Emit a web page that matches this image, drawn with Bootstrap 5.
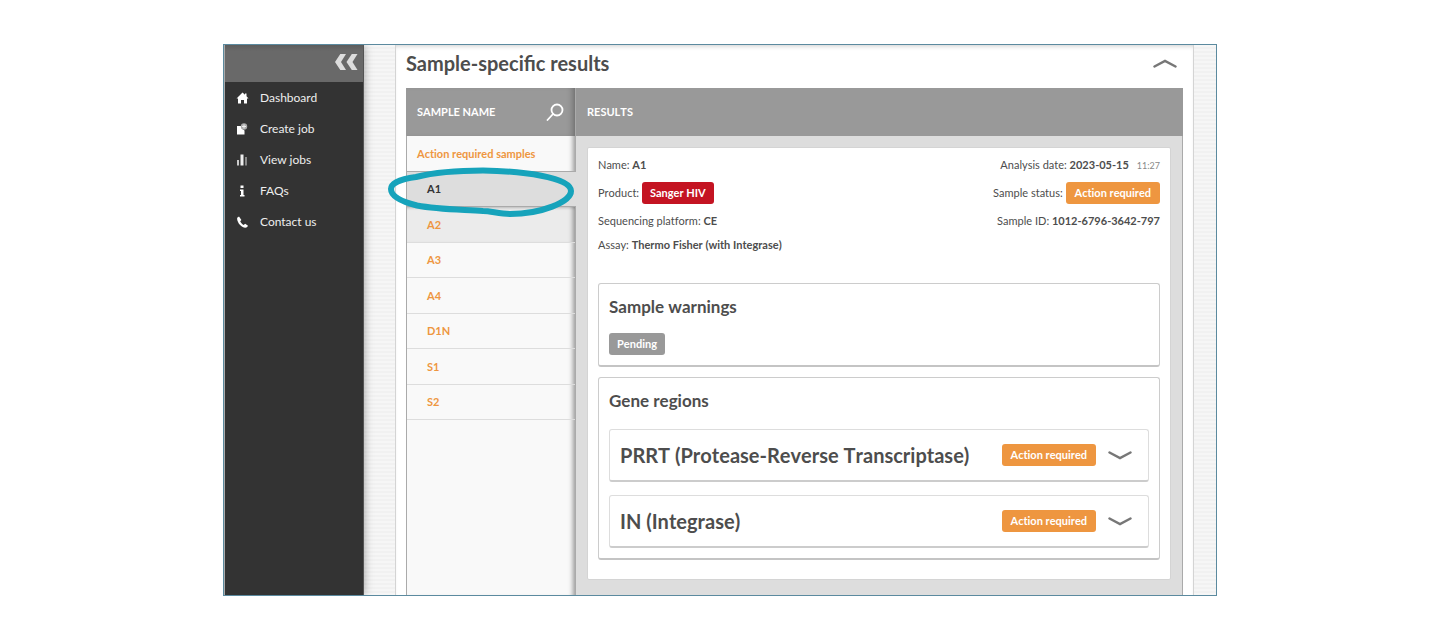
<!DOCTYPE html>
<html lang="en">
<head>
<meta charset="utf-8">
<meta name="viewport" content="width=device-width, initial-scale=1">
<title>Sample-specific results</title>
<link href="https://cdn.jsdelivr.net/npm/bootstrap@5.3.0/dist/css/bootstrap.min.css" rel="stylesheet">
<style>
body{font-family:Lato,"Liberation Sans",sans-serif;font-size:12px;line-height:16px;color:#4d4d4d;background:#fff}
.page{padding:44px 223px}
.shell{border:1px solid #5b8a9f;min-height:552px;background:#f4f4f4 repeating-linear-gradient(#f6f6f6 0 2px,#f1f1f1 2px 4px);overflow:hidden}
.side{width:140px;background:#333;border-left:1px solid #aaa;border-right:1px solid #555;box-shadow:0 0 9px rgba(0,0,0,.35);z-index:1}
.side-top{height:37px;background:linear-gradient(#5c5c5c,#696969 6px);padding:0 5px 3px}
.side-link{height:31px;gap:11px;padding-left:11px;color:#eee;text-decoration:none}
.side-link:hover{color:#fff}
.panel{margin:0 22px 0 31px;padding:0 10px;background:#fff;border:solid #d4d4d4;border-width:0 1px;box-shadow:inset 0 4px 5px -3px rgba(0,0,0,.2)}
.panel-head{height:43px;padding-right:6px;padding-bottom:8px}
.panel-title{font-size:20px;line-height:24px;font-weight:700;margin:0}
.icon-btn{border:0;background:none;padding:0;line-height:0;color:#777}
.names{width:170px;background:#f9f9f9;border-left:1px solid #aaa;box-shadow:inset -6px 0 5px -4px rgba(0,0,0,.4);border-right:1px solid #aaa}
.bar{height:48px;background:#999;color:#fff;font-size:11px;font-weight:700;font-kerning:none}
.names .bar{padding:0 11px 0 10px;margin-left:-1px;border-left:1px solid #999;box-shadow:inset -6px 0 6px -4px rgba(0,0,0,.3)}
.results{background:#ddd;border-right:1px solid #aaa}
.results .bar{padding:0 11px;margin-right:-1px}
.rows{height:284px}
.row-item{padding:1px 0 0 20px;border-bottom:1px solid #ddd;color:#ee9640;font-size:11px;font-weight:700;text-decoration:none;flex:1 1 0}
.row-item:hover{color:#c9721a}
.row-head{padding-left:10px;border-color:#aaa}
.row-on{background:#ddd;color:#333;border-color:#aaa;margin-right:-1px}
.row-near{background:#ebebeb;box-shadow:inset -6px 0 5px -4px rgba(0,0,0,.4),inset 0 3px 3px -2px rgba(0,0,0,.2)}
.ring{position:absolute;left:-21px;top:-6px;z-index:2;pointer-events:none}
.sheet{margin:11px 11px 15px 11px;padding:5px 10px 19px 10px;background:#fff;border:1px solid #d4d4d4;border-radius:2px}
.info{font-size:11px;min-height:130px}
.info,.tag,.row-item,.box-title,.region-title{font-kerning:none;font-variant-ligatures:none}
.line-s{height:24px}
.line-l{height:32px}
.tag{display:inline-block;height:22px;line-height:22px;padding:0 8px;border-radius:3px;color:#fff;font-size:11px;font-weight:700}
.tag-red{background:#c41422}
.tag-orange{background:#ee9640;padding:0 9px}
.tag-grey{background:#999}
.time{font-size:9px;color:#888;margin-left:8px}
.box{background:#fff;border:1px solid #ccc;border-bottom:2px solid #c4c4c4;border-radius:3px;padding:11px 10px 10px}
.box + .box{margin-top:10px}
.box-title{font-size:17px;line-height:24px;font-weight:700;margin:0}
.warn-list{padding-top:14px;line-height:22px}
.warn-list .tag{vertical-align:top}
.regions{margin-top:16px;display:grid;gap:13px}
.region{background:#fff;border:1px solid #ddd;border-bottom:2px solid #ccc;border-radius:3px;height:53px;padding:0 16px 0 10px}
.region-title{font-size:20px;line-height:24px;font-weight:700;margin:0}
</style>
</head>
<body>
<div class="page">
<div class="shell d-flex">
  <nav class="side flex-shrink-0" aria-label="Main">
    <div class="side-top d-flex align-items-center justify-content-end">
      <button class="icon-btn" type="button" aria-label="Collapse menu"><svg width="23" height="16" viewBox="0 0 23 16" fill="#ddd"><path d="M0 8 5.300 0H11L6 8l5 8H5.300zM11.500 8l5.300-8h5.700l-5 8 5 8h-5.700z"/></svg></button>
    </div>
    <a class="side-link d-flex align-items-center" href="#"><svg width="13" height="12" viewBox="0 0 13 12" fill="#fff"><path d="M6.500.5 9 2.800V1.500h1.500v2.800L12.500 6.500H11V11.500H8V8H5v3.500H2V6.500H.5z"/></svg><span>Dashboard</span></a>
    <a class="side-link d-flex align-items-center" href="#"><svg width="13" height="12" viewBox="0 0 13 12"><path d="M1 3h5l.5 3 2 1.500V11.500H1z" fill="#fff"/><circle cx="8" cy="3.500" r="3.200" fill="#aaa"/><path d="M8 1.500v4M6 3.500h4" stroke="#eee"/></svg><span>Create job</span></a>
    <a class="side-link d-flex align-items-center" href="#"><svg width="13" height="12" viewBox="0 0 13 12"><path d="M1 6h2v5.500H1z" fill="#ccc"/><path d="M4.500 .5h3v11h-3z" fill="#eee"/><path d="M9 3h2v8.500H9z" fill="#888"/></svg><span>View jobs</span></a>
    <a class="side-link d-flex align-items-center" href="#"><svg width="13" height="12" viewBox="0 0 13 12" fill="#fff"><path d="M4.500 .5h3v2.500h-3zM4 4.500h3.500v5.500h1V11.500H4V10h1V6H4z"/></svg><span>FAQs</span></a>
    <a class="side-link d-flex align-items-center" href="#"><svg width="13" height="12" viewBox="0 0 13 12" fill="#fff"><path d="M3 .5 1.200 1.800C.5 5 4 11 9 11.700c1.200.2 2.500-.8 3-2L9.200 7.700 7.600 9C6 8.200 4.700 6.600 4.200 5.200L5.400 4z"/></svg><span>Contact us</span></a>
  </nav>
  <main class="panel flex-grow-1 d-flex flex-column">
    <div class="panel-head d-flex align-items-center justify-content-between">
      <h1 class="panel-title">Sample-specific results</h1>
      <button class="icon-btn" type="button" aria-label="Collapse section"><svg width="24" height="12" viewBox="0 0 24 12" fill="none" stroke="currentColor" stroke-width="2.500" stroke-linecap="round"><path d="M1.500 9.500 12 4 22.500 9.500"/></svg></button>
    </div>
    <div class="d-flex flex-grow-1">
      <div class="names flex-shrink-0">
        <div class="bar d-flex align-items-center justify-content-between">
          <span>SAMPLE NAME</span>
          <button class="icon-btn text-white" type="button" aria-label="Search samples"><svg width="18" height="18" viewBox="0 0 18 18" fill="none" stroke="currentColor" stroke-width="1.800" stroke-linecap="round"><circle cx="11" cy="7" r="5.500"/><path d="M7 11 1.500 17"/></svg></button>
        </div>
        <div class="rows d-flex flex-column">
          <div class="row-item row-head d-flex align-items-center">Action required samples</div>
          <a class="row-item row-on d-flex align-items-center position-relative" href="#" aria-current="true">A1
            <svg class="ring" width="192" height="54" viewBox="0 0 192 54" fill="none" stroke="#16a3bb" stroke-width="6"><path d="M30 11C52 5.500 75 4.500 97 4.500C135 5 185 11 185 25C185 36 155 48 124 48C113 48 105 45 97 45C75 43.500 52 43.500 31 39.500C17 36 5 31 5 23C5 17 15 13 30 11Z"/></svg></a>
          <a class="row-item row-near d-flex align-items-center" href="#">A2</a>
          <a class="row-item d-flex align-items-center" href="#">A3</a>
          <a class="row-item d-flex align-items-center" href="#">A4</a>
          <a class="row-item d-flex align-items-center" href="#">D1N</a>
          <a class="row-item d-flex align-items-center" href="#">S1</a>
          <a class="row-item d-flex align-items-center" href="#">S2</a>
        </div>
      </div>
      <div class="results flex-grow-1">
        <div class="bar d-flex align-items-center">RESULTS</div>
        <div class="sheet">
          <div class="info d-flex justify-content-between">
            <div>
              <div class="line-s d-flex align-items-center"><span>Name: <b>A1</b></span></div>
              <div class="line-l d-flex align-items-center"><span>Product: <span class="tag tag-red">Sanger HIV</span></span></div>
              <div class="line-s d-flex align-items-center"><span>Sequencing platform: <b>CE</b></span></div>
              <div class="line-s d-flex align-items-center"><span>Assay: <b>Thermo Fisher (with Integrase)</b></span></div>
            </div>
            <div>
              <div class="line-s d-flex align-items-center justify-content-end"><span>Analysis date: <b>2023-05-15</b><span class="time">11:27</span></span></div>
              <div class="line-l d-flex align-items-center justify-content-end"><span>Sample status: <span class="tag tag-orange">Action required</span></span></div>
              <div class="line-s d-flex align-items-center justify-content-end"><span>Sample ID: <b>1012-6796-3642-797</b></span></div>
            </div>
          </div>
          <section class="box">
            <h2 class="box-title">Sample warnings</h2>
            <div class="warn-list"><span class="tag tag-grey">Pending</span></div>
          </section>
          <section class="box">
            <h2 class="box-title">Gene regions</h2>
            <div class="regions">
              <div class="region d-flex align-items-center justify-content-between">
                <h3 class="region-title">PRRT (Protease-Reverse Transcriptase)</h3>
                <div class="d-flex align-items-center gap-2"><span class="tag tag-orange">Action required</span>
                <button class="icon-btn ms-1" type="button" aria-label="Expand PRRT"><svg width="24" height="12" viewBox="0 0 24 12" fill="none" stroke="currentColor" stroke-width="2.500" stroke-linecap="round"><path d="M1.500 3.500 12 9 22.500 3.500"/></svg></button></div>
              </div>
              <div class="region d-flex align-items-center justify-content-between">
                <h3 class="region-title">IN (Integrase)</h3>
                <div class="d-flex align-items-center gap-2"><span class="tag tag-orange">Action required</span>
                <button class="icon-btn ms-1" type="button" aria-label="Expand IN"><svg width="24" height="12" viewBox="0 0 24 12" fill="none" stroke="currentColor" stroke-width="2.500" stroke-linecap="round"><path d="M1.500 3.500 12 9 22.500 3.500"/></svg></button></div>
              </div>
            </div>
          </section>
        </div>
      </div>
    </div>
  </main>
</div>
</div>
<script src="https://cdn.jsdelivr.net/npm/bootstrap@5.3.0/dist/js/bootstrap.bundle.min.js"></script>
</body>
</html>
